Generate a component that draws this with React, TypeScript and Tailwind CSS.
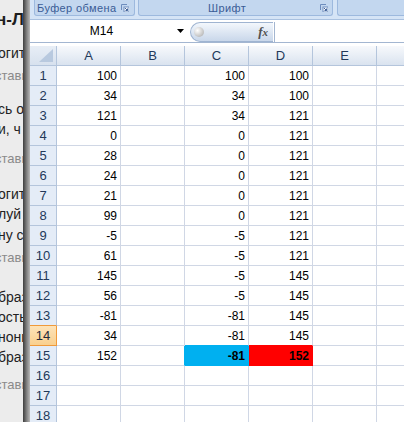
import React from "react";

const A = [100, 34, 121, 0, 28, 24, 21, 99, -5, 61, 145, 56, -81, 34, 152];
const C = [100, 34, 34, 0, 0, 0, 0, 0, -5, -5, -5, -5, -81, -81, -81];
const D = [100, 100, 121, 121, 121, 121, 121, 121, 121, 121, 145, 145, 145, 145, 152];

const leftLines: { t: string; cls: string }[] = [
  { t: "н-Л", cls: "mt-[8px] h-[24px] leading-[24px] text-[17px] font-bold text-[#1e1e1e] ml-[-4px]" },
  { t: "огит", cls: "mt-[11px] h-[20px] leading-[20px] text-[14px] text-[#222] ml-[-2px]" },
  { t: "стави", cls: "mt-[3px] h-[20px] leading-[20px] text-[13px] text-[#8a8a8a] ml-[-5px]" },
  { t: "сь о", cls: "mt-[13px] h-[20px] leading-[20px] text-[14px] text-[#222] ml-[-2px]" },
  { t: "и, ч", cls: "h-[20px] leading-[20px] text-[14px] text-[#222] ml-[-2px]" },
  { t: "стави", cls: "mt-[10px] h-[20px] leading-[20px] text-[13px] text-[#8a8a8a] ml-[-5px]" },
  { t: "огит", cls: "mt-[15px] h-[20px] leading-[20px] text-[14px] text-[#222] ml-[-2px]" },
  { t: "луй", cls: "h-[20px] leading-[20px] text-[14px] text-[#222] ml-[-2px]" },
  { t: "ну с", cls: "mt-[1px] h-[20px] leading-[20px] text-[14px] text-[#222] ml-[-2px]" },
  { t: "стави", cls: "mt-[3px] h-[20px] leading-[20px] text-[13px] text-[#8a8a8a] ml-[-5px]" },
  { t: "браз", cls: "mt-[19px] h-[20px] leading-[20px] text-[14px] text-[#222] ml-[-2px]" },
  { t: "ость", cls: "h-[20px] leading-[20px] text-[14px] text-[#222] ml-[-2px]" },
  { t: "нони", cls: "h-[20px] leading-[20px] text-[14px] text-[#222] ml-[-2px]" },
  { t: "браз", cls: "h-[20px] leading-[20px] text-[14px] text-[#222] ml-[-2px]" },
  { t: "стави", cls: "mt-[8px] h-[20px] leading-[20px] text-[13px] text-[#8a8a8a] ml-[-5px]" },
];

function Launcher() {
  return (
    <svg width="8" height="8" viewBox="0 0 8 8" className="shrink-0">
      <path d="M0.5 6V0.5H6" stroke="#6d8cbd" strokeWidth="1" fill="none" />
      <rect x="3" y="3" width="5" height="5" fill="#ffffff" stroke="#6d8cbd" strokeWidth="1" />
      <path d="M4 4L6.5 6.5M6.5 4.5V6.5H4.5" stroke="#40629a" strokeWidth="1" fill="none" />
    </svg>
  );
}

function ColHead({ label }: { label: string }) {
  return (
    <div className="h-[20px] flex items-end justify-center pb-[3px] leading-[13px] text-[13px] text-[#23395a] bg-linear-to-b from-[#f7f9fc] to-[#dae3ef] border-r border-b border-[#b4c5dc]">
      {label}
    </div>
  );
}

function RowHead({ n }: { n: number }) {
  const active = n === 14;
  const preActive = n === 13;
  const cls = active
    ? "bg-linear-to-b from-[#fde3b8] to-[#f9d08f] border-[#f09a3a] text-[#1f2a3a]"
    : preActive
    ? "bg-[#e4ecf7] border-r-[#b4c5dc] border-b-[#f09a3a] text-[#23395a]"
    : "bg-[#e4ecf7] border-[#b4c5dc] text-[#23395a]";
  return (
    <div className={`h-[20px] flex items-end justify-center pb-[3px] leading-[13px] text-[13px] border-r border-b ${cls}`}>
      {n}
    </div>
  );
}

function Cell({ v, extra }: { v?: number; extra?: string }) {
  return (
    <div
      className={`h-[20px] flex items-end justify-end pr-[3px] pb-[3px] leading-[12px] text-[12px] text-black border-r border-b ${
        extra ?? "border-[#d0d7e5] bg-white"
      }`}
    >
      {v !== undefined ? v : ""}
    </div>
  );
}

export default function App() {
  const rows = Array.from({ length: 18 }, (_, i) => i + 1);
  return (
    <div className="w-[404px] h-[422px] overflow-hidden flex bg-white font-['Liberation_Sans',Arial,sans-serif]">
      {/* background document strip */}
      <div className="w-[23px] shrink-0 h-full bg-[#ececec] overflow-hidden flex flex-col">
        {leftLines.map((l, i) => (
          <div key={i} className={`whitespace-nowrap ${l.cls}`}>
            {l.t}
          </div>
        ))}
      </div>
      {/* window shadow */}
      <div className="w-[7px] shrink-0 h-full bg-linear-to-r from-[#3e3e3e] via-[#7d7d7d] to-[#b9b9b9]" />
      {/* excel */}
      <div className="flex-1 flex flex-col min-w-0">
        {/* ribbon bottom */}
        <div className="h-[20px] shrink-0 bg-[#d5e4f6] border-b border-[#a9c1e0] flex items-start pl-[4px]">
          <div className="w-[101px] h-[16px] bg-[#c3d7ef] border-x border-b border-[#9db9de] rounded-b-[3px] flex items-center pl-[2px] pr-[5px] justify-between">
            <span className="whitespace-nowrap text-[11px] leading-[14px] tracking-[0.4px] text-[#3a5c96]">
              Буфер обмена
            </span>
            <Launcher />
          </div>
          <div className="ml-[3px] w-[195px] h-[16px] bg-[#c3d7ef] border-x border-b border-[#9db9de] rounded-b-[3px] flex items-center pl-[69px] pr-[4px] justify-between">
            <span className="whitespace-nowrap text-[11px] leading-[14px] tracking-[0.4px] text-[#3a5c96]">
              Шрифт
            </span>
            <Launcher />
          </div>
          <div className="ml-[4px] flex-1 h-[16px] bg-[#c3d7ef] border-l border-b border-[#9db9de] rounded-bl-[3px]" />
        </div>
        {/* formula bar */}
        <div className="h-[23px] shrink-0 bg-white border-b border-[#a3b6d1] flex">
          <div className="w-[143px] flex items-end justify-center pb-[5px] text-[12px] leading-[12px] text-black">
            M14
          </div>
          <div className="w-[15px] flex items-center justify-center">
            <svg width="7" height="4" viewBox="0 0 7 4">
              <path d="M0 0H7L3.5 4Z" fill="#000" />
            </svg>
          </div>
          <div className="ml-[2px] mt-[2px] w-[83px] h-[20px] rounded-l-full border border-r-0 border-[#9fb4d1] bg-linear-to-b from-[#f3f7fc] to-[#c9d7ea] flex items-center justify-between pl-[3px] pr-[5px]">
            <div className="w-[10px] h-[10px] rounded-full bg-[radial-gradient(circle_at_35%_35%,#ffffff,#a5a5a5)]" />
            <span className="font-['Liberation_Serif',serif] italic font-bold text-[13px] leading-[13px] text-[#505050]">
              f<span className="text-[11px]">x</span>
            </span>
          </div>
          <div className="ml-[1px] mt-[2px] flex-1 border-l border-[#a3b6d1] bg-white" />
        </div>
        <div className="h-[3px] shrink-0 bg-white" />
        {/* grid */}
        <div className="grid grid-cols-[27px_64px_64px_64px_64px_64px_64px]">
          <div className="h-[20px] relative bg-linear-to-b from-[#e8eef6] to-[#d7e1ee] border-r border-b border-[#b4c5dc]">
            <svg width="14" height="13" viewBox="0 0 14 13" className="absolute right-[3px] bottom-[3px]">
              <path d="M14 0V13H0Z" fill="#b8c9df" />
            </svg>
          </div>
          <ColHead label="A" />
          <ColHead label="B" />
          <ColHead label="C" />
          <ColHead label="D" />
          <ColHead label="E" />
          <ColHead label="" />
          {rows.map((r) => {
            const i = r - 1;
            const has = r <= 15;
            return (
              <React.Fragment key={r}>
                <RowHead n={r} />
                <Cell v={has ? A[i] : undefined} />
                <Cell extra={r === 15 ? "border-r-[#00b0f0] border-b-[#d0d7e5] bg-white" : undefined} />
                {r === 15 ? (
                  <Cell v={C[i]} extra="border-[#00b0f0] bg-[#00b0f0] font-bold" />
                ) : r === 14 ? (
                  <Cell v={C[i]} extra="border-r-[#d0d7e5] border-b-[#00b0f0] bg-white" />
                ) : (
                  <Cell v={has ? C[i] : undefined} />
                )}
                {r === 15 ? (
                  <Cell v={D[i]} extra="border-[#ff0000] bg-[#ff0000] font-bold" />
                ) : r === 14 ? (
                  <Cell v={D[i]} extra="border-r-[#d0d7e5] border-b-[#ff0000] bg-white" />
                ) : (
                  <Cell v={has ? D[i] : undefined} />
                )}
                <Cell />
                <Cell />
              </React.Fragment>
            );
          })}
        </div>
      </div>
    </div>
  );
}
